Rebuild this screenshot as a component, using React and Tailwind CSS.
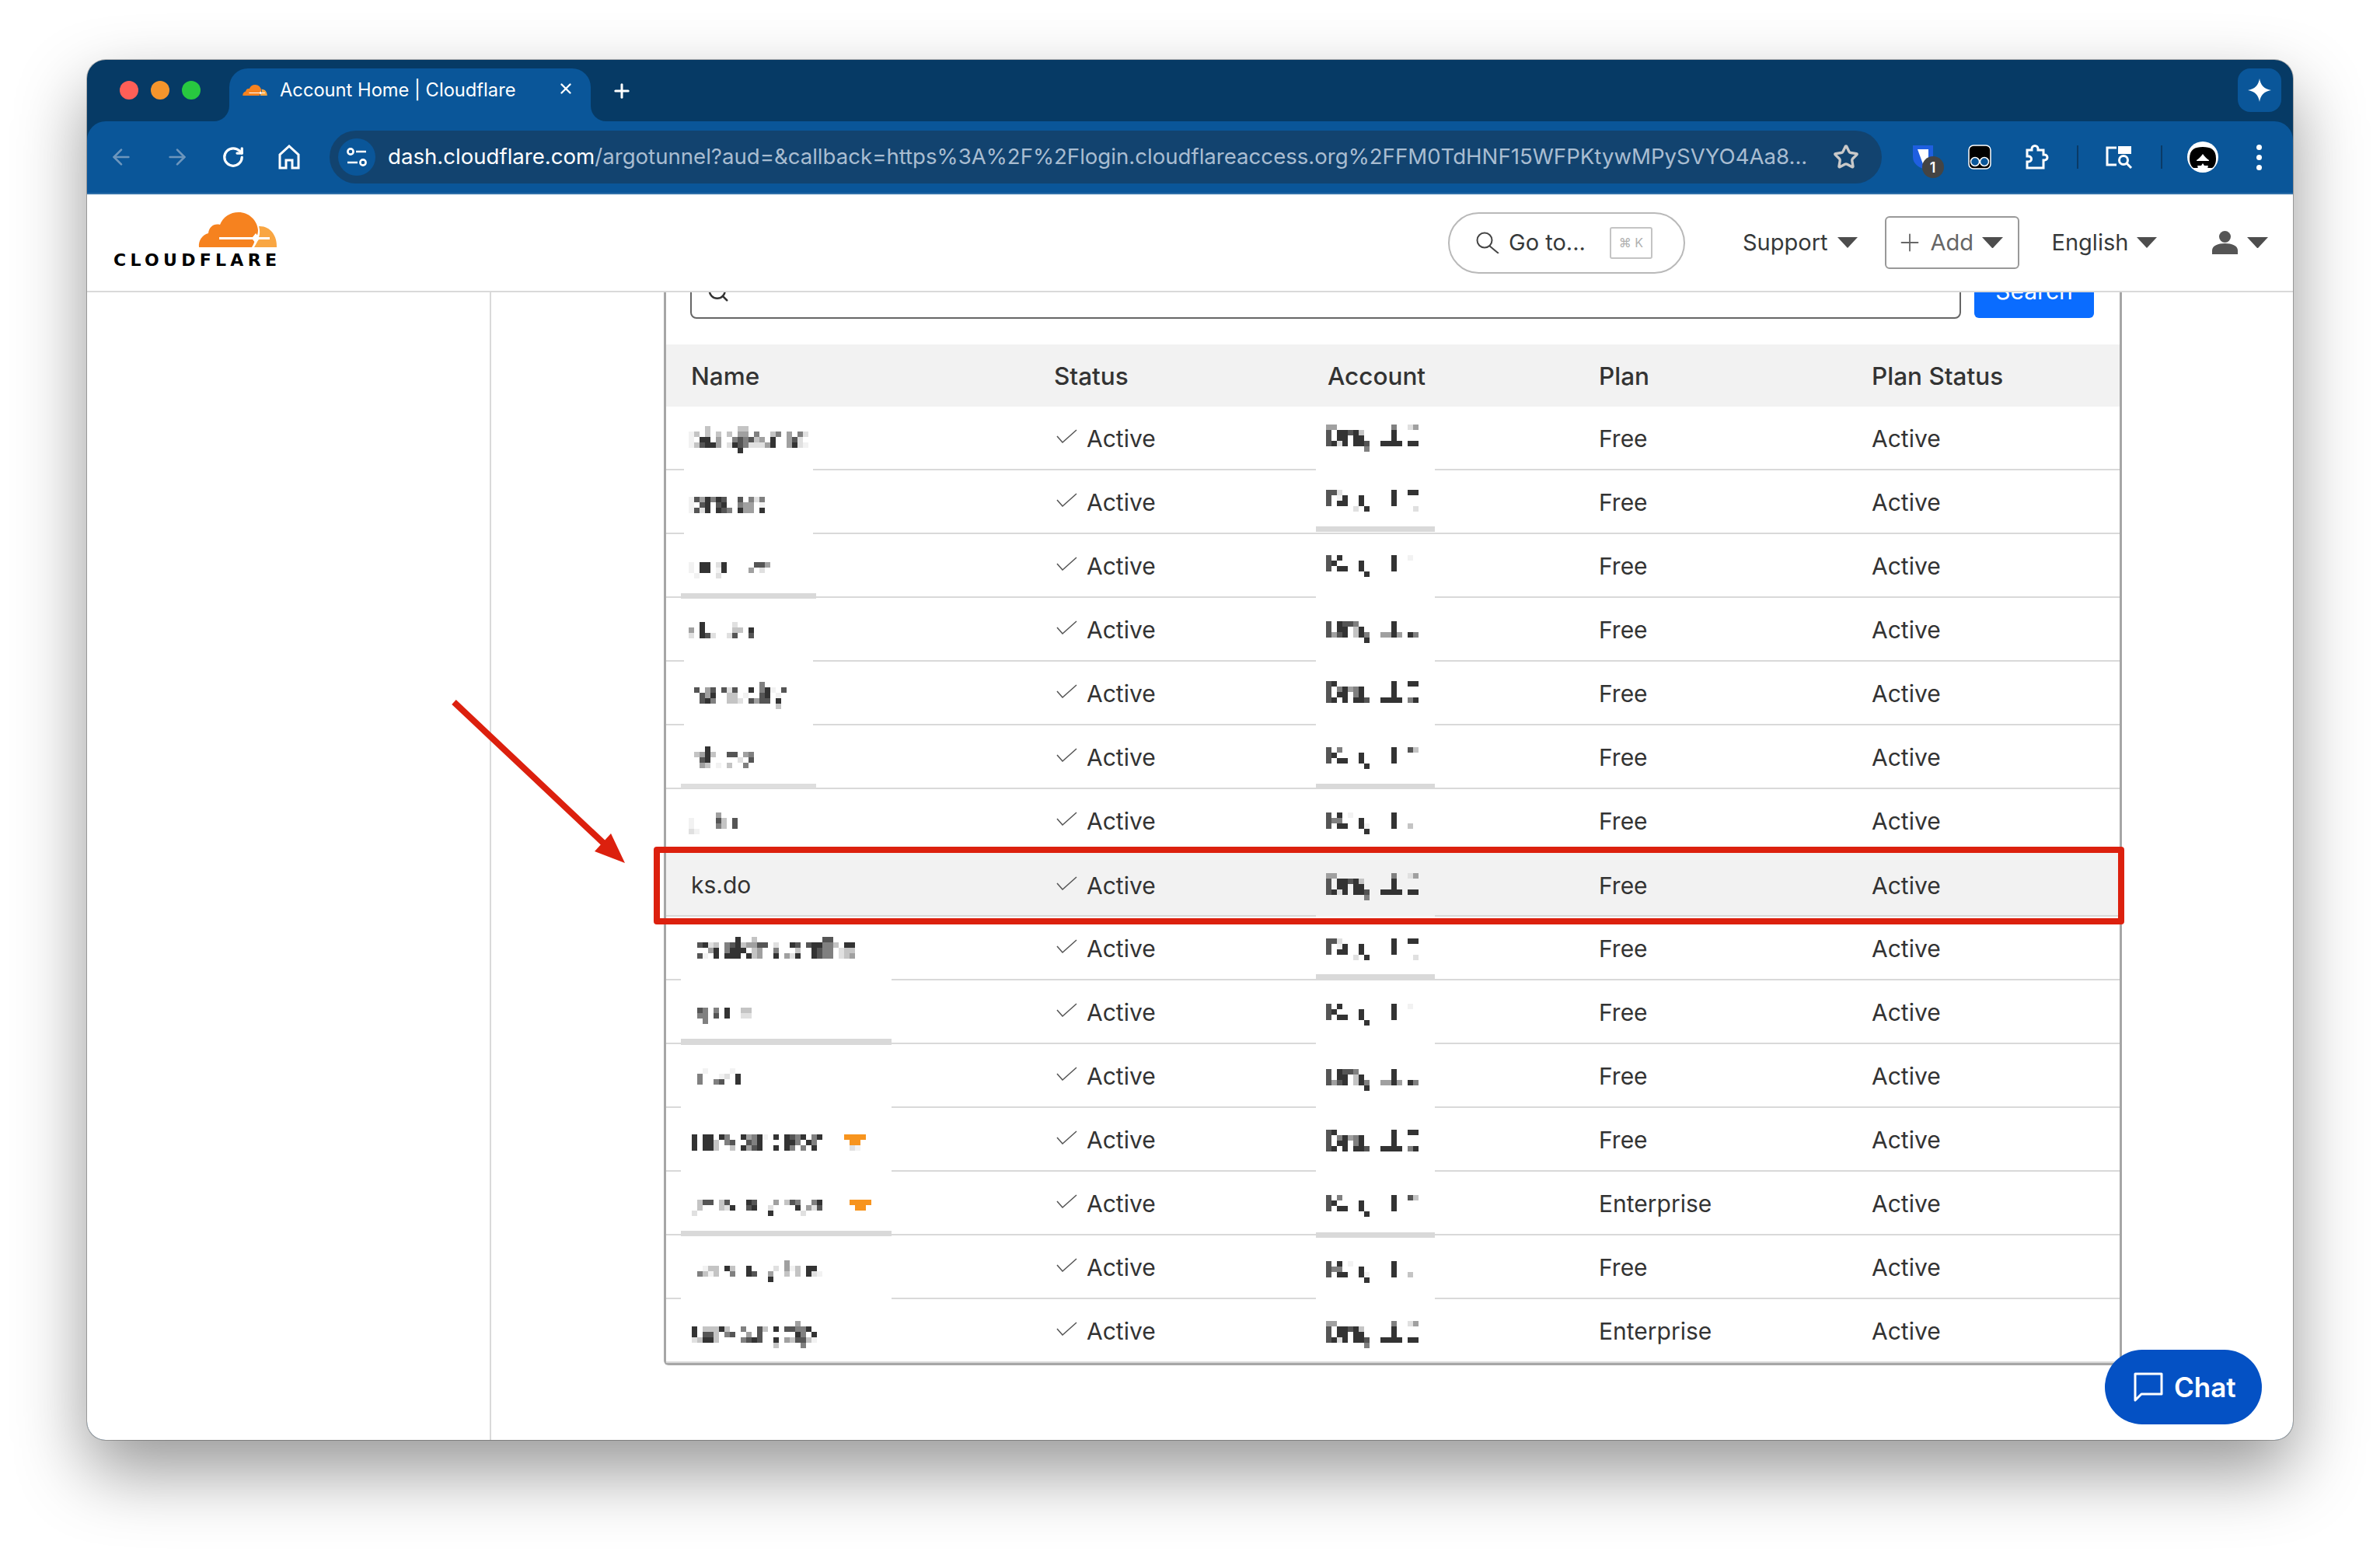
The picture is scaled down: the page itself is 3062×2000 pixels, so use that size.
import { ArrowLeft, ArrowRight, RotateCw, Star, Search, X, Plus } from 'lucide-react';

const SHADES = {
  a: '#333333',
  b: '#555555',
  c: '#808080',
  d: '#a0a0a0',
  e: '#c4c4c4',
  f: '#e0e0e0',
  g: '#f2f2f2',
  o: '#f7941e',
};

// pixelated account names, one string per row of blocks
const ACCOUNTS = {
  A: ['dd..........c..fd', 'b.aabae.....a....', 'b.aa.aa.....a....', 'bafa.aab..aaaa.aa', '.......c.........'],
  B: ['bbf.........a..aa', 'b.ga..a.....a....', 'b.aa..a.....a....', '.....f.a........f'],
  C: ['b.a.........a..g.', 'ba....a.....a....', 'b.aa..a.....a....', '.......a.........'],
  D: ['b.abbc......a....', 'b.aa.ea.....a....', 'bdba.eac..ddad.ac', '.......a.........'],
  E: ['ba..........a..aa', 'b.cadca.....a....', 'b.aa.ca.....a....', 'ba.a.aab..aaaa.ca'],
  F: ['b.c.........a..be', 'ba....a.....a....', 'b.aa..a.....a....', '.......a.........'],
  G: ['b.a.g.......a....', 'bcc...a.....a....', 'b.aa..ag....a..e.', '.......a.........'],
};

const ROWS = [
  { x: 29, y: 25, name: ['...e.....ee...........', 'ge.e.e.e.dd.c..ec.d.cf', 'g.aa.d..cbcbed.a..dbf.', 'gebaad.fabcfffda..dafg', '.........a'], account: 'A', ay: 23, nameGap: 'short', acctGap: 'white' },
  { x: 29, y: 34, name: ['gbdacab..b.cfc', 'g.ba.ba..cdd.g', 'gbfa.abc.add.a'], account: 'B', ay: 25, nameGap: 'short', acctBar: 'bottom-[1px] h-[7px] bg-[#d9d9d9]' },
  { x: 29, y: 36, name: ['g.aa.fa.....bbd', 'g.aa.ga....d.f', '.g...f'], account: 'C', ay: 27, nameBar: 'bottom-[-3px] h-[7px] left-[19px] w-[174px] bg-[#d9d9d9]', acctGap: 'white' },
  { x: 29, y: 31, name: ['..a.....f', 'd.a.....ee.a', 'f.abf..fb..b'], account: 'D', ay: 30, nameGap: 'short', acctGap: 'white' },
  { x: 29, y: 26, name: ['.............c', '.b.db.bfb..a.cag.b', '..bda..ee.g..ba.g', '..bac..eef.bdbb.a', '................e'], account: 'E', ay: 25, nameGap: 'short', acctGap: 'white' },
  { x: 29, y: 27, name: ['...a', '.edae..bb.dc', '..ba.....f.b', '..de.g.e..c'], account: 'F', ay: 28, nameBar: 'bottom-[-1px] h-[6px] left-[19px] w-[174px] bg-[#dedede]', acctBar: 'bottom-[-1px] h-[6px] bg-[#d9d9d9]' },
  { x: 29, y: 30, name: ['.....d', 'g....be.b', 'g....ce.b', 'fg'], account: 'G', ay: 30 },
  { text: 'ks.do', account: 'A', ay: 26, selected: true, acctGap: 'grey' },
  { x: 40, y: 26, name: ['.......a..e............bb', 'bafe.cbaeddbb.f..ab.baacce.aa', '..da.caaa.ed..c...e..abcc.fee', 'bg.a.aaa.aed..a.dfa..abcc.fed'], account: 'B', ay: 28, nameGap: 'long', acctBar: 'bottom-[-1px] h-[7px] bg-[#d9d9d9]' },
  { x: 40, y: 35, name: ['bc.c.a..ee', 'cc.b.a..ff', '.c'], account: 'C', ay: 30, nameBar: 'bottom-[-3px] h-[8px] left-[19px] w-[271px] bg-[#d9d9d9]', acctGap: 'white' },
  { x: 40, y: 31, name: ['.g....g', 'c...gf.a', 'c..cb..a'], account: 'D', ay: 32, nameGap: 'long', acctGap: 'white' },
  { x: 33, y: 34, name: ['a.aa.ac..adcag.a.abca.ca....oooo', 'a.aae.cb..bca....aac.ac......oo', 'a.aae..e.adba..a.ac.c.a......fg'], account: 'E', ay: 28, nameGap: 'long', acctGap: 'white' },
  { x: 33, y: 36, name: ['.ebb.eb...ab...d.ebc..ca.....oooo', '.e...efa..ba..f....a.dfb......oo', 'f.............a.....f'], account: 'F', ay: 30, nameBar: 'bottom-[-3px] h-[7px] left-[19px] w-[271px] bg-[#d9d9d9]', acctBar: 'bottom-[-5px] h-[7px] bg-[#d9d9d9]' },
  { x: 33, y: 32, name: ['.................d', '..gee.ae..a....f.dge.aa', '.cege..c..ab..d..e.e.afg', '..............a'], account: 'G', ay: 33, nameGap: 'long', acctGap: 'white' },
  { x: 33, y: 28, name: ['...................d', 'a.eeeae..c..be.a.bbcca', 'a.bbe.cb..d.b......ac.a', 'feaae....cbab..a.debbeg', '...............e....c'], account: 'A', ay: 28, last: true },
];

const PLANS = ['Free', 'Free', 'Free', 'Free', 'Free', 'Free', 'Free', 'Free', 'Free', 'Free', 'Free', 'Free', 'Enterprise', 'Free', 'Enterprise'];

function Mosaic({ lines, x, y, width }) {
  return (
    <svg width={width} height={80} className="block" shapeRendering="crispEdges">
      {lines.map((line, i) =>
        line.split('').map((c, j) =>
          c === '.' ? null : (
            <rect key={`${i}-${j}`} x={x + j * 7} y={y + i * 7} width={7} height={7} fill={SHADES[c]} />
          )
        )
      )}
    </svg>
  );
}

function CloudLogo({ className }) {
  return (
    <svg viewBox="0 0 102 45" className={className}>
      <path d="M1 45C0 37 5 29 13 27C14 19 20 14 28 16C32 6 41 0 52 0C65 0 76 10 77 23C77 27 76 30 74 33C72 39 71 42 69 45Z" fill="#f6821f" />
      <path d="M72 45C75 40 77 36 78 32C80 27 79 22 78 18C92 17 102 30 101 45Z" fill="#f9a642" />
      <path d="M27 32H70L74 27L78 32H92V35H78L74 40L70 35H27Z" fill="#fff" />
    </svg>
  );
}

function Caret({ className }) {
  return (
    <svg viewBox="0 0 26 14" className={className}>
      <path d="M0 0H26L13 14Z" fill="#4d4d4d" />
    </svg>
  );
}

function Check() {
  return (
    <svg width="27" height="18" viewBox="0 0 27 18" className="shrink-0 -translate-y-[3px]">
      <path d="M1 9L8 17L26 1" fill="none" stroke="#555" strokeWidth="1.5" />
    </svg>
  );
}

function TableRow({ row, plan }) {
  const nameGap = row.nameGap === 'short' ? 'left-[23px] w-[166px]' : 'left-[19px] w-[271px]';
  return (
    <div
      className={`relative grid h-[82px] grid-cols-[467px_352px_349px_351px_1fr] items-center border-b-2 border-[#d9d9d9] text-[30px] text-[#333] ${
        row.selected ? 'bg-[#f2f2f2]' : ''
      } ${row.last ? 'border-b-0' : ''}`}
    >
      <div className="h-full">
        {row.text ? (
          <div className="pl-[32px] leading-[82px]">{row.text}</div>
        ) : (
          <Mosaic lines={row.name} x={row.x} y={row.y} width={467} />
        )}
      </div>
      <div className="flex items-center gap-[12px] pt-[2px] pl-[35px]">
        <Check />
        <span>Active</span>
      </div>
      <div className="h-full">
        <Mosaic lines={ACCOUNTS[row.account]} x={30} y={row.ay} width={349} />
      </div>
      <div className="pt-[2px] pl-[32px]">{plan}</div>
      <div className="pt-[2px] pl-[32px]">Active</div>

      {row.nameGap && <div className={`absolute -bottom-[2px] h-[2px] bg-white ${nameGap}`} />}
      {row.nameBar && <div className={`absolute ${row.nameBar}`} />}
      {row.acctGap === 'white' && <div className="absolute -bottom-[2px] left-[836px] h-[2px] w-[153px] bg-white" />}
      {row.acctGap === 'grey' && <div className="absolute -bottom-[2px] left-[836px] h-[2px] w-[153px] bg-[#f2f2f2]" />}
      {row.acctBar && <div className={`absolute left-[836px] w-[153px] ${row.acctBar}`} />}
      {row.selected && (
        <div className="absolute -top-[8px] -right-[6px] -bottom-[12px] -left-[16px] z-10 rounded-[4px] border-[8px] border-[#dc200e]" />
      )}
    </div>
  );
}

function TabBar() {
  return (
    <div className="flex h-[79px] shrink-0">
      <div className="ml-[42px] flex h-[79px] items-center gap-4 pb-[1px]">
        <span className="size-[24px] rounded-full bg-[#ff5f57]" />
        <span className="size-[24px] rounded-full bg-[#f5952c]" />
        <span className="size-[24px] rounded-full bg-[#28c840]" />
      </div>
      <div className="relative mt-[11px] ml-[37px] flex h-[68px] w-[465px] items-center rounded-t-[24px] bg-[#0a5699] pb-[12px] pl-[17px] text-white">
        <span className="absolute bottom-0 -left-[20px] size-[20px] bg-[#0a5699]">
          <span className="block size-full rounded-br-[20px] bg-[#063a65]" />
        </span>
        <span className="absolute -right-[20px] bottom-0 size-[20px] bg-[#0a5699]">
          <span className="block size-full rounded-bl-[20px] bg-[#063a65]" />
        </span>
        <CloudLogo className="w-[32px] shrink-0" />
        <span className="ml-[16px] text-[23.7px] whitespace-nowrap">Account Home | Cloudflare</span>
        <X className="absolute top-[15px] right-[21px]" size={22} strokeWidth={2.6} />
      </div>
      <Plus className="mt-[26px] ml-[26px] text-white" size={28} strokeWidth={2.6} />
      <div className="mt-[11px] mr-[15px] ml-auto flex size-[56px] items-center justify-center rounded-[16px] bg-[#0a5699]">
        <svg viewBox="0 0 24 24" className="size-[30px]">
          <path d="M12 0C13 7 17 11 24 12C17 13 13 17 12 24C11 17 7 13 0 12C7 11 11 7 12 0Z" fill="#fff" />
        </svg>
      </div>
    </div>
  );
}

function Toolbar() {
  return (
    <div className="flex h-[94px] shrink-0 items-center rounded-t-[24px] border-b-2 border-[#2f6fa8] bg-[#0a5699] pl-[8px]">
      <div className="flex w-[72px] justify-center text-[#6d96bd]"><ArrowLeft size={32} strokeWidth={2} /></div>
      <div className="flex w-[72px] justify-center text-[#6d96bd]"><ArrowRight size={32} strokeWidth={2} /></div>
      <div className="flex w-[72px] justify-center text-white"><RotateCw size={30} strokeWidth={2.6} /></div>
      <div className="flex w-[72px] justify-center">
        <svg viewBox="0 0 28 32" className="h-[32px] w-[28px]" fill="none" stroke="#fff" strokeWidth="3">
          <path d="M2 30V13L14 2L26 13V30H18V20H10V30Z" />
        </svg>
      </div>
      <div className="ml-[16px] flex h-[68px] w-[1997px] items-center rounded-full bg-[#12436f] pr-[29px] pl-[11px]">
        <span className="flex size-[48px] shrink-0 items-center justify-center rounded-full bg-[#0a5699]">
          <svg viewBox="0 0 26 26" className="size-[26px]" fill="none" stroke="#fff" strokeWidth="2.6">
            <circle cx="5" cy="6" r="3.6" />
            <path d="M12 6H25M1 20H14" />
            <circle cx="21" cy="20" r="3.6" />
          </svg>
        </span>
        <span className="ml-[16px] flex-1 text-[27.6px] whitespace-nowrap text-[#a9bdd1]">
          <span className="text-white">dash.cloudflare.com</span>
          /argotunnel?aud=&callback=https%3A%2F%2Flogin.cloudflareaccess.org%2FFM0TdHNF15WFPKtywMPySVYO4Aa8...
        </span>
        <Star className="shrink-0 text-[#c9c9c9]" size={34} strokeWidth={2.4} />
      </div>

      <div className="ml-[16px] flex w-[73px] justify-center">
        <span className="relative block h-[32px] w-[28px]">
          <svg viewBox="0 0 28 32" className="h-[32px] w-[28px]">
            <path d="M1 1H27V16C27 24 20 29 14 31C8 29 1 24 1 16Z" fill="#1f5fe0" />
            <path d="M7 6H21V16C21 20 17 24 14 25Z" fill="#fff" />
          </svg>
          <span className="absolute top-[15px] left-[13px] flex h-[28px] w-[28px] items-center justify-center rounded-full bg-[#444] font-semibold text-[18px] text-white">1</span>
        </span>
      </div>
      <div className="flex w-[73px] justify-center">
        <svg viewBox="0 0 30 32" className="h-[32px] w-[30px]">
          <rect x="1" y="1" width="28" height="30" rx="6" fill="#000" stroke="#fff" strokeWidth="1.5" />
          <circle cx="9" cy="22" r="5.5" fill="#0a5699" stroke="#fff" strokeWidth="1.5" />
          <circle cx="21" cy="22" r="5.5" fill="#0a5699" stroke="#fff" strokeWidth="1.5" />
        </svg>
      </div>
      <div className="flex w-[73px] justify-center">
        <svg viewBox="0 0 34 34" className="size-[34px]" fill="none" stroke="#fff" strokeWidth="3">
          <path d="M5 8H11V6.5a4 4 0 0 1 8 0V8h7v6h1.5a3.5 3.5 0 0 1 0 7H26v10H5v-8h2a3.5 3.5 0 0 0 0-7H5z" />
        </svg>
      </div>
      <div className="flex w-[34px] justify-center"><span className="h-[30px] w-[2px] bg-[#0a3a66]" /></div>
      <div className="flex w-[74px] justify-center">
        <svg viewBox="0 0 36 30" className="h-[30px] w-[36px]" fill="none" stroke="#fff" strokeWidth="3">
          <path d="M14 3H2V25H14" />
          <path d="M16 1H33V11H16Z" fill="#fff" stroke="none" />
          <circle cx="23" cy="19" r="5.5" />
          <path d="M27 23L33 29" />
        </svg>
      </div>
      <div className="flex w-[33px] justify-center"><span className="h-[30px] w-[2px] bg-[#0a3a66]" /></div>
      <div className="flex w-[74px] justify-center">
        <svg viewBox="0 0 40 40" className="size-[40px]">
          <circle cx="20" cy="20" r="20" fill="#fff" />
          <path d="M3 22C3 10 10 7 20 7C30 7 37 10 37 22C37 28 35 32 32 34H8C5 32 3 28 3 22Z" fill="#000" />
          <path d="M12 24C15 22 17 20 20 16C23 20 25 22 28 24L26 36H14Z" fill="#fff" />
          <path d="M10 25H30L27 31H22L20 28L18 31H13Z" fill="#000" />
        </svg>
      </div>
      <div className="flex w-[70px] flex-col items-center gap-[6px]">
        <span className="size-[7px] rounded-full bg-white" />
        <span className="size-[7px] rounded-full bg-white" />
        <span className="size-[7px] rounded-full bg-white" />
      </div>
    </div>
  );
}

function Header() {
  return (
    <div className="flex h-[126px] shrink-0 items-center border-b-2 border-[#d9d9d9] bg-white pl-[34px] text-[29px] text-[#36393a]">
      <div className="flex w-[213px] flex-col items-end pb-[6px]">
        <CloudLogo className="mr-[2px] w-[102px]" />
        <span className="mt-[7px] w-full font-['DejaVu_Sans'] text-[22px] leading-[20px] font-bold tracking-[5.3px] whitespace-nowrap text-black">CLOUDFLARE</span>
      </div>
      <div className="ml-[1504px] flex h-[79px] w-[305px] items-center rounded-full border-2 border-[#b9b9b9] pl-[34px]">
        <svg viewBox="0 0 30 28" className="h-[28px] w-[30px] shrink-0" fill="none" stroke="#444" strokeWidth="2">
          <circle cx="11" cy="11" r="9.5" />
          <path d="M17 18L29 28" />
        </svg>
        <span className="ml-[12px] whitespace-nowrap">Go to...</span>
        <span className="ml-[31px] flex h-[41px] w-[55px] items-center justify-center rounded-[3px] border-2 border-[#c4c4c4] text-[16px] text-[#b0b0b0]">⌘ K</span>
      </div>
      <span className="ml-[74px]">Support</span>
      <Caret className="ml-[12px] w-[26px]" />
      <div className="ml-[35px] flex h-[68px] w-[173px] items-center rounded-[6px] border-2 border-[#999] pl-[12px] text-[#666]">
        <Plus size={36} strokeWidth={1.2} className="shrink-0" />
        <span className="ml-[9px]">Add</span>
        <Caret className="ml-[11px] w-[27px]" />
      </div>
      <span className="ml-[42px]">English</span>
      <Caret className="ml-[11px] w-[26px]" />
      <svg viewBox="0 0 33 30" className="ml-[71px] h-[30px] w-[33px]">
        <circle cx="16.5" cy="7.5" r="7.5" fill="#555" />
        <path d="M0 30V25C0 19 8 16 16.5 16C25 16 33 19 33 25V30Z" fill="#555" />
      </svg>
      <Caret className="ml-[12px] w-[27px]" />
    </div>
  );
}

export default function App() {
  return (
    <div className="relative h-[2000px] w-[3062px] overflow-hidden bg-white pt-[77px] pl-[112px] font-['Inter','DejaVu_Sans',sans-serif]">
      <div className="relative flex h-[1775px] w-[2838px] flex-col overflow-hidden rounded-[24px] bg-[#063a65] shadow-[0_0_0_1px_rgba(0,0,0,0.25),0_40px_90px_rgba(0,0,0,0.41)]">
        <TabBar />
        <Toolbar />
        <Header />
        <div className="flex min-h-0 flex-1 overflow-hidden bg-white">
          <div className="w-[520px] shrink-0 border-r-2 border-[#d9d9d9]" />
          <div className="-mt-[36px] ml-[222px] h-fit w-[1876px] shrink-0 rounded-b-[6px] border-x-[3px] border-b-[3px] border-[#a6a6a6]">
            <div className="flex items-start pr-[33px] pl-[31px]">
              <div className="flex h-[70px] flex-1 items-center rounded-b-[8px] border-2 border-[#666] pl-[19px]">
                <Search size={30} strokeWidth={2} className="text-[#333]" />
              </div>
              <div className="ml-[17px] flex h-[69px] w-[154px] items-center justify-center rounded-b-[6px] bg-[#0a6cff] text-[30px] text-white">Search</div>
            </div>
            <div className="mt-[33px] grid h-[80px] grid-cols-[467px_352px_349px_351px_1fr] items-center bg-[#f2f2f2] pt-[1px] text-[31.5px] font-medium text-[#333]">
              <div className="pl-[32px]">Name</div>
              <div className="pl-[32px]">Status</div>
              <div className="pl-[32px]">Account</div>
              <div className="pl-[32px]">Plan</div>
              <div className="pl-[32px]">Plan Status</div>
            </div>
            {ROWS.map((row, i) => (
              <TableRow key={i} row={row} plan={PLANS[i]} />
            ))}
          </div>
        </div>
        <div className="absolute right-[40px] bottom-[20px] flex h-[96px] w-[202px] items-center rounded-full bg-[#0451c4] pl-[37px] text-[35px] font-semibold text-white">
          <svg viewBox="0 0 38 38" className="size-[38px]" fill="none" stroke="#fff" strokeWidth="3">
            <path d="M2 36V2H36V28H10Z" strokeLinejoin="round" />
          </svg>
          <span className="ml-[14px]">Chat</span>
        </div>
      </div>
      <svg className="pointer-events-none absolute top-0 left-0" width="3062" height="2000">
        <path d="M584 903L776 1084" stroke="#dc200e" strokeWidth="8" fill="none" />
        <path d="M804 1110L786 1072L765 1095Z" fill="#dc200e" />
      </svg>
    </div>
  );
}
